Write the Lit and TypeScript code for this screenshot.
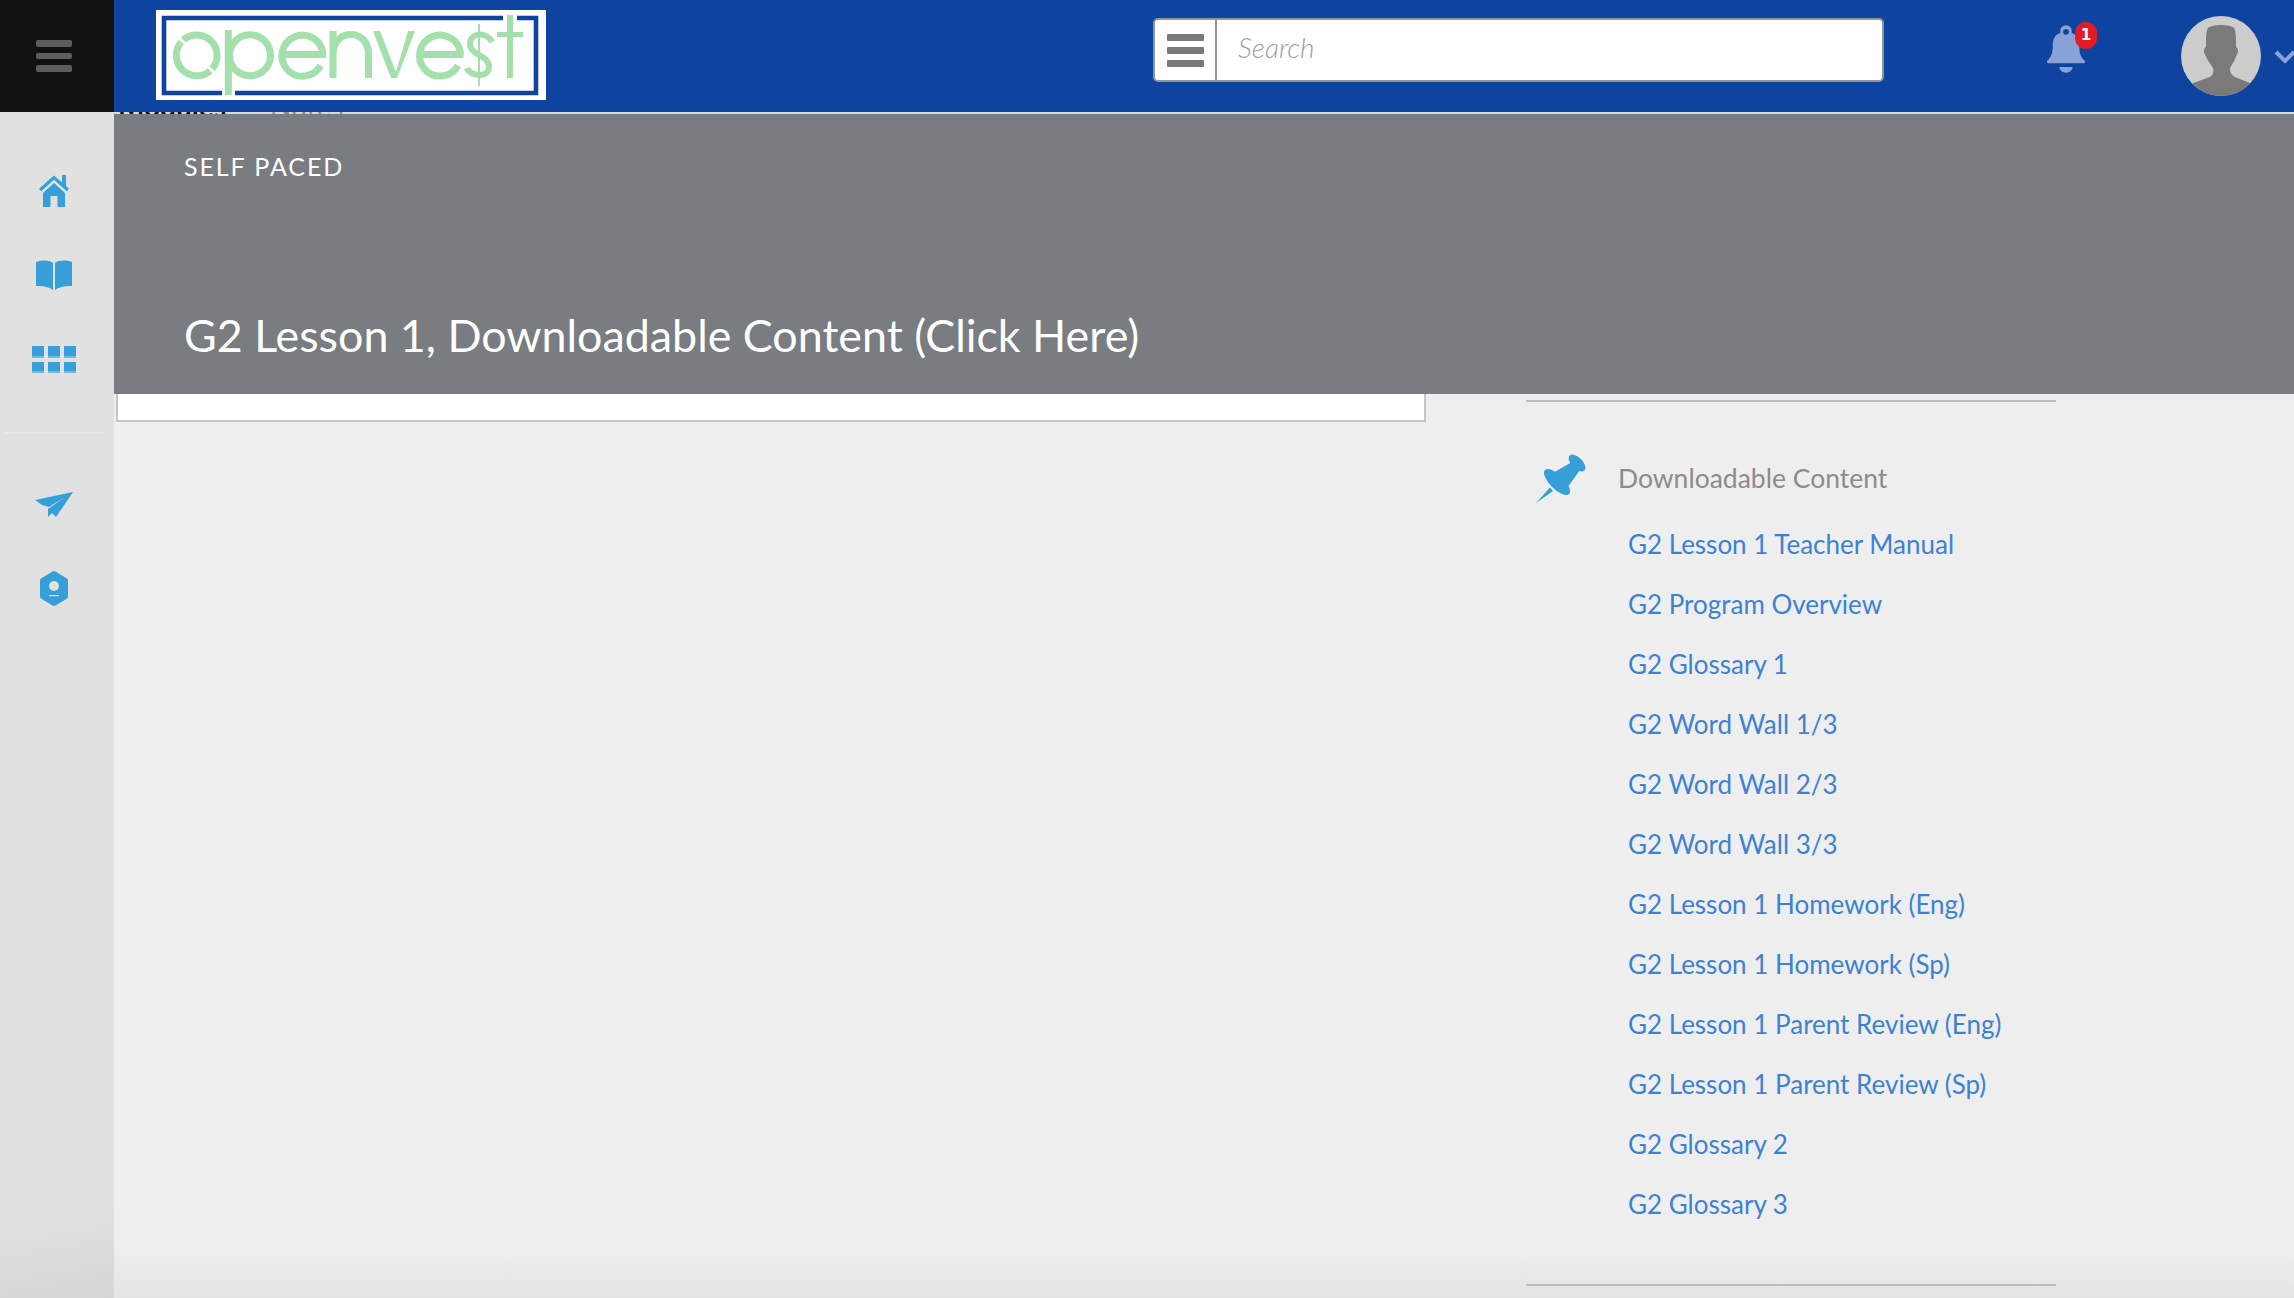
import { LitElement, html, css, svg } from "lit";
import { customElement } from "lit/decorators.js";

const LINKS = [
  "G2 Lesson 1 Teacher Manual",
  "G2 Program Overview",
  "G2 Glossary 1",
  "G2 Word Wall 1/3",
  "G2 Word Wall 2/3",
  "G2 Word Wall 3/3",
  "G2 Lesson 1 Homework (Eng)",
  "G2 Lesson 1 Homework (Sp)",
  "G2 Lesson 1 Parent Review (Eng)",
  "G2 Lesson 1 Parent Review (Sp)",
  "G2 Glossary 2",
  "G2 Glossary 3",
];

const logo = svg`<svg class="logo-art" viewBox="0 0 390 90" aria-hidden="true">
  <g fill="none" stroke="#0e439f" stroke-width="4.6">
    <path d="M347 8H8V83H66"/>
    <path d="M79 83H380V8H361"/>
  </g>
  <g fill="none" stroke="#a3e0ac" stroke-width="7">
    <path d="M27.300 29.800A20.500 20.500 0 0 1 56.200 58.700"/>
    <path d="M54.100 60.800A20.500 20.500 0 0 1 25.200 31.900"/>
    <circle cx="94" cy="45.300" r="20.500"/>
    <path d="M72.300 20V85"/>
    <path d="M166.900 44A20.500 20.500 0 1 0 164.500 55.500"/>
    <path d="M126 44.500H170"/>
    <path d="M177 21V68M177 44C177 18 212.500 18 212.500 44V68"/>
    <path d="M304.500 44A20.500 20.500 0 1 0 302 55.500"/>
    <path d="M264 44.500H307.500"/>
    <path d="M336 32C331 22 315 22 314 33C313 46 333 44 333 57C333 68 314 67 311 58" stroke-width="6"/>
    <path d="M323 14V76" stroke-width="2"/>
    <path d="M354 5V68" stroke-width="6"/>
    <path d="M341 24.500H367" stroke-width="5"/>
  </g>
  <path d="M217 21H224L240 62L252 21H259L241 68H235Z" fill="#a3e0ac"/>
</svg>`;

const burger = (cls: string) => html`<span class=${cls}><i></i><i></i><i></i></span>`;

@customElement("app-root")
export class AppRoot extends LitElement {
  static styles = css`
    :host {
      display: block;
      width: 2294px;
      height: 1298px;
      overflow: hidden;
      position: relative;
      font-family: "Lato", "Noto Sans", sans-serif;
      background: #eeeeee;
    }
    .page {
      display: grid;
      grid-template-columns: 114px 2180px;
      grid-template-rows: 112px 1186px;
      height: 1298px;
    }
    .burger-cell {
      background: #111111;
      display: flex;
      align-items: center;
      justify-content: center;
      padding-right: 6px;
    }
    .burger {
      display: flex;
      flex-direction: column;
      gap: 6px;
      width: 36px;
    }
    .burger i {
      display: block;
      height: 6.5px;
      border-radius: 2px;
      background: #5d5d5d;
    }
    .top {
      background: #0e439f;
      display: flex;
      align-items: flex-start;
      overflow: hidden;
    }
    .logo {
      margin: 10px 0 0 42px;
      width: 390px;
      height: 90px;
      background: #fff;
      flex: none;
    }
    .logo-art {
      display: block;
      width: 390px;
      height: 90px;
    }
    .search {
      margin: 18px 0 0 607px;
      width: 731px;
      height: 64px;
      box-sizing: border-box;
      display: flex;
      background: #fff;
      border: 2px solid #949494;
      border-radius: 5px;
      flex: none;
    }
    .search-btn {
      width: 62px;
      box-sizing: border-box;
      border-right: 2px solid #949494;
      display: flex;
      align-items: center;
      justify-content: center;
    }
    .sburger {
      display: flex;
      flex-direction: column;
      gap: 6px;
      width: 37px;
    }
    .sburger i {
      display: block;
      height: 7px;
      border-radius: 1px;
      background: #7a7a7a;
    }
    .search-text {
      font-size: 28px;
      font-style: italic;
      font-weight: 300;
      color: #a0a0a0;
      padding-left: 21px;
      line-height: 54px;
    }
    .bell {
      margin: 22px 0 0 163px;
      position: relative;
      width: 60px;
      height: 60px;
      flex: none;
    }
    .bell svg {
      display: block;
      width: 38px;
      height: 50px;
      margin-top: 1px;
    }
    .badge {
      position: absolute;
      left: 28px;
      top: 0;
      width: 22px;
      height: 27px;
      border-radius: 11px;
      background: #e41b23;
      color: #fff;
      font-size: 15px;
      font-weight: 700;
      line-height: 27px;
      text-align: center;
      font-family: "DejaVu Sans", sans-serif;
    }
    .avatar {
      margin: 16px 0 0 74px;
      width: 80px;
      height: 80px;
      flex: none;
      display: block;
    }
    .chev {
      margin: 50px 0 0 13px;
      width: 22px;
      height: 14px;
      flex: none;
      display: block;
    }
    .side {
      background: linear-gradient(170deg, #e1e1e1 92%, #d6d6d6 100%);
      display: flex;
      flex-direction: column;
      align-items: center;
      padding: 37px 6px 0 0;
      box-sizing: border-box;
    }
    .nav-icon {
      display: flex;
      align-items: center;
      justify-content: center;
      height: 84px;
      width: 100%;
    }
    .nav-icon svg {
      display: block;
      fill: #369fda;
    }
    .side hr {
      width: 100px;
      height: 2px;
      background: #e7e7e7;
      border: 0;
      margin: 31px 0 28px;
      flex: none;
    }
    .main {
      background: linear-gradient(180deg, #eeeeee 96%, #e5e5e5 100%);
      display: flex;
      flex-direction: column;
      min-width: 0;
    }
    .peek {
      height: 2px;
      background: #d9d9d9;
      overflow: hidden;
      display: flex;
      align-items: flex-end;
      font-size: 28px;
      line-height: 28px;
      flex: none;
    }
    .peek span {
      margin-bottom: -6px;
    }
    .peek .mod {
      margin-left: 4px;
      color: #111;
      font-weight: 700;
    }
    .peek .note {
      margin-left: 44px;
      color: #8c8c8c;
    }
    .banner {
      background: #797c80;
      height: 280px;
      box-sizing: border-box;
      padding: 36px 0 0 70px;
      color: #fff;
      display: flex;
      flex-direction: column;
      flex: none;
    }
    .kicker {
      font-size: 25px;
      line-height: 32px;
      letter-spacing: 1.9px;
      font-weight: 400;
    }
    .title {
      font-size: 44.8px;
      line-height: 60px;
      font-weight: 400;
      margin-top: 123px;
    }
    .below {
      display: flex;
      align-items: flex-start;
      flex: 1;
    }
    .card {
      margin-left: 2px;
      width: 1310px;
      height: 28px;
      box-sizing: border-box;
      background: #fff;
      border: 2px solid #c6c6c6;
      border-top: 0;
      flex: none;
    }
    .aside {
      margin-left: 100px;
      width: 530px;
      box-sizing: border-box;
      height: 886px;
      margin-top: 6px;
      border-top: 2px solid #bdbdbd;
      border-bottom: 2px solid #bdbdbd;
      flex: none;
    }
    .aside-head {
      display: flex;
      align-items: center;
      margin-top: 48px;
      height: 56px;
    }
    .aside-head svg {
      display: block;
      margin-left: 10px;
      width: 50px;
      height: 50px;
      fill: #369fda;
      flex: none;
    }
    .aside-head span {
      margin-left: 32px;
      font-size: 26.5px;
      font-weight: 400;
      color: #8c8c8c;
    }
    .links {
      list-style: none;
      margin: 8px 0 0;
      padding: 0 0 0 102px;
      display: flex;
      flex-direction: column;
    }
    .links li {
      height: 60px;
      line-height: 60px;
      font-size: 26px;
      font-weight: 400;
      color: #3d82d2;
      white-space: nowrap;
    }
  `;

  render() {
    return html`
      <div class="page">
        <div class="burger-cell">${burger("burger")}</div>
        <header class="top">
          <div class="logo">${logo}</div>
          <div class="search">
            <div class="search-btn">${burger("sburger")}</div>
            <div class="search-text">Search</div>
          </div>
          <div class="bell">
            <svg viewBox="0 0 40 52" fill="#87a3d6">
              <path fill-rule="evenodd" d="M20 2a6 6 0 0 1 6 6v2c7 3 8 8 8 15 0 8 2 10 5 14a1.500 1.500 0 0 1-1 3H2a1.500 1.500 0 0 1-1-3c3-4 5-6 5-14 0-7 1-12 8-15V8a6 6 0 0 1 6-6Zm0 4a3 3 0 1 0 0 6 3 3 0 0 0 0-6Z"/>
              <path d="M13 46h14a7 6 0 0 1-14 0Z"/>
            </svg>
            <span class="badge">1</span>
          </div>
          <svg class="avatar" viewBox="0 0 80 80">
            <defs><clipPath id="av"><circle cx="40" cy="40" r="40"/></clipPath></defs>
            <circle cx="40" cy="40" r="40" fill="#cccccc"/>
            <path clip-path="url(#av)" fill="#7a7a7a" d="M27 12C31 8 49 8 53 12C55 15 55 22 55 31C57 32 58 36 56 38C54 44 52 47 49 52C49 56 50 59 54 61L69 67L80 80L0 80L12 67L29 61C32 59 33 56 32 52C29 47 26 44 24 38C22 36 23 32 25 31C25 22 25 15 27 12Z"/>
          </svg>
          <svg class="chev" viewBox="0 0 22 14"><path d="M2 2l9 9 9-9" fill="none" stroke="#87a3d6" stroke-width="4"/></svg>
        </header>
        <nav class="side">
          <div class="nav-icon"><svg width="30" height="32" viewBox="0 0 30 32"><path d="M15 0.500 23 7.500V0H27V11L30 13.800 27.800 16.200 15 4.800 2.200 16.200 0 13.800Z"/><path d="M15 8 26 18V32H18.500V21H11.500V32H4V18Z"/></svg></div>
          <div class="nav-icon"><svg width="36" height="30" viewBox="0 0 36 30"><path d="M0 2C6 0 13 0 17 3V30C13 26.500 6 25.500 0 26Z"/><path d="M36 2C30 0 23 0 19 3V30C23 26.500 30 25.500 36 26Z"/></svg></div>
          <div class="nav-icon"><svg width="44" height="27" viewBox="0 0 44 27"><path d="M0 0H12V10.500H0ZM16 0H28V10.500H16ZM32 0H44V10.500H32ZM0 16H12V25.500H0ZM16 16H28V25.500H16ZM32 16H44V25.500H32Z"/><path fill-opacity=".6" d="M0 10.500H12V12H0ZM16 10.500H28V12H16ZM32 10.500H44V12H32ZM0 25.500H12V27H0ZM16 25.500H28V27H16ZM32 25.500H44V27H32Z"/></svg></div>
          <hr />
          <div class="nav-icon"><svg width="38" height="25" viewBox="0 0 38 25"><path d="M38 0 0 8 7 13 14 15 30 5 13 17 13 25 17 21 21 25Z"/></svg></div>
          <div class="nav-icon"><svg width="28" height="35" viewBox="0 0 28 35"><path fill-rule="evenodd" d="M12.500 0.500Q14 0 15.500 0.500L27 7.500Q28 8 28 9.500V25.500Q28 27 27 27.500L15.500 34.500Q14 35 12.500 34.500L1 27.500Q0 27 0 25.500V9.500Q0 8 1 7.500ZM14 10a5 5 0 1 0 0 10 5 5 0 0 0 0-10ZM9 24V25.200H19V24Z"/></svg></div>
        </nav>
        <main class="main">
          <div class="peek"><span class="mod">Modules</span><span class="note">Notes</span></div>
          <section class="banner">
            <div class="kicker">SELF PACED</div>
            <div class="title">G2 Lesson 1, Downloadable Content (Click Here)</div>
          </section>
          <div class="below">
            <div class="card"></div>
            <aside class="aside">
              <div class="aside-head">
                <svg viewBox="0 0 50 50"><ellipse cx="41" cy="10" rx="10.500" ry="5.500" transform="rotate(45 41 10)"/><ellipse cx="21" cy="29" rx="17" ry="7" transform="rotate(45 21 29)"/><path d="M36 9 44 17 31 35 15 21Z"/><path d="M14 34.500 17 38 0 50Z"/></svg>
                <span>Downloadable Content</span>
              </div>
              <ul class="links">${LINKS.map((l) => html`<li>${l}</li>`)}</ul>
            </aside>
          </div>
        </main>
      </div>
    `;
  }
}
